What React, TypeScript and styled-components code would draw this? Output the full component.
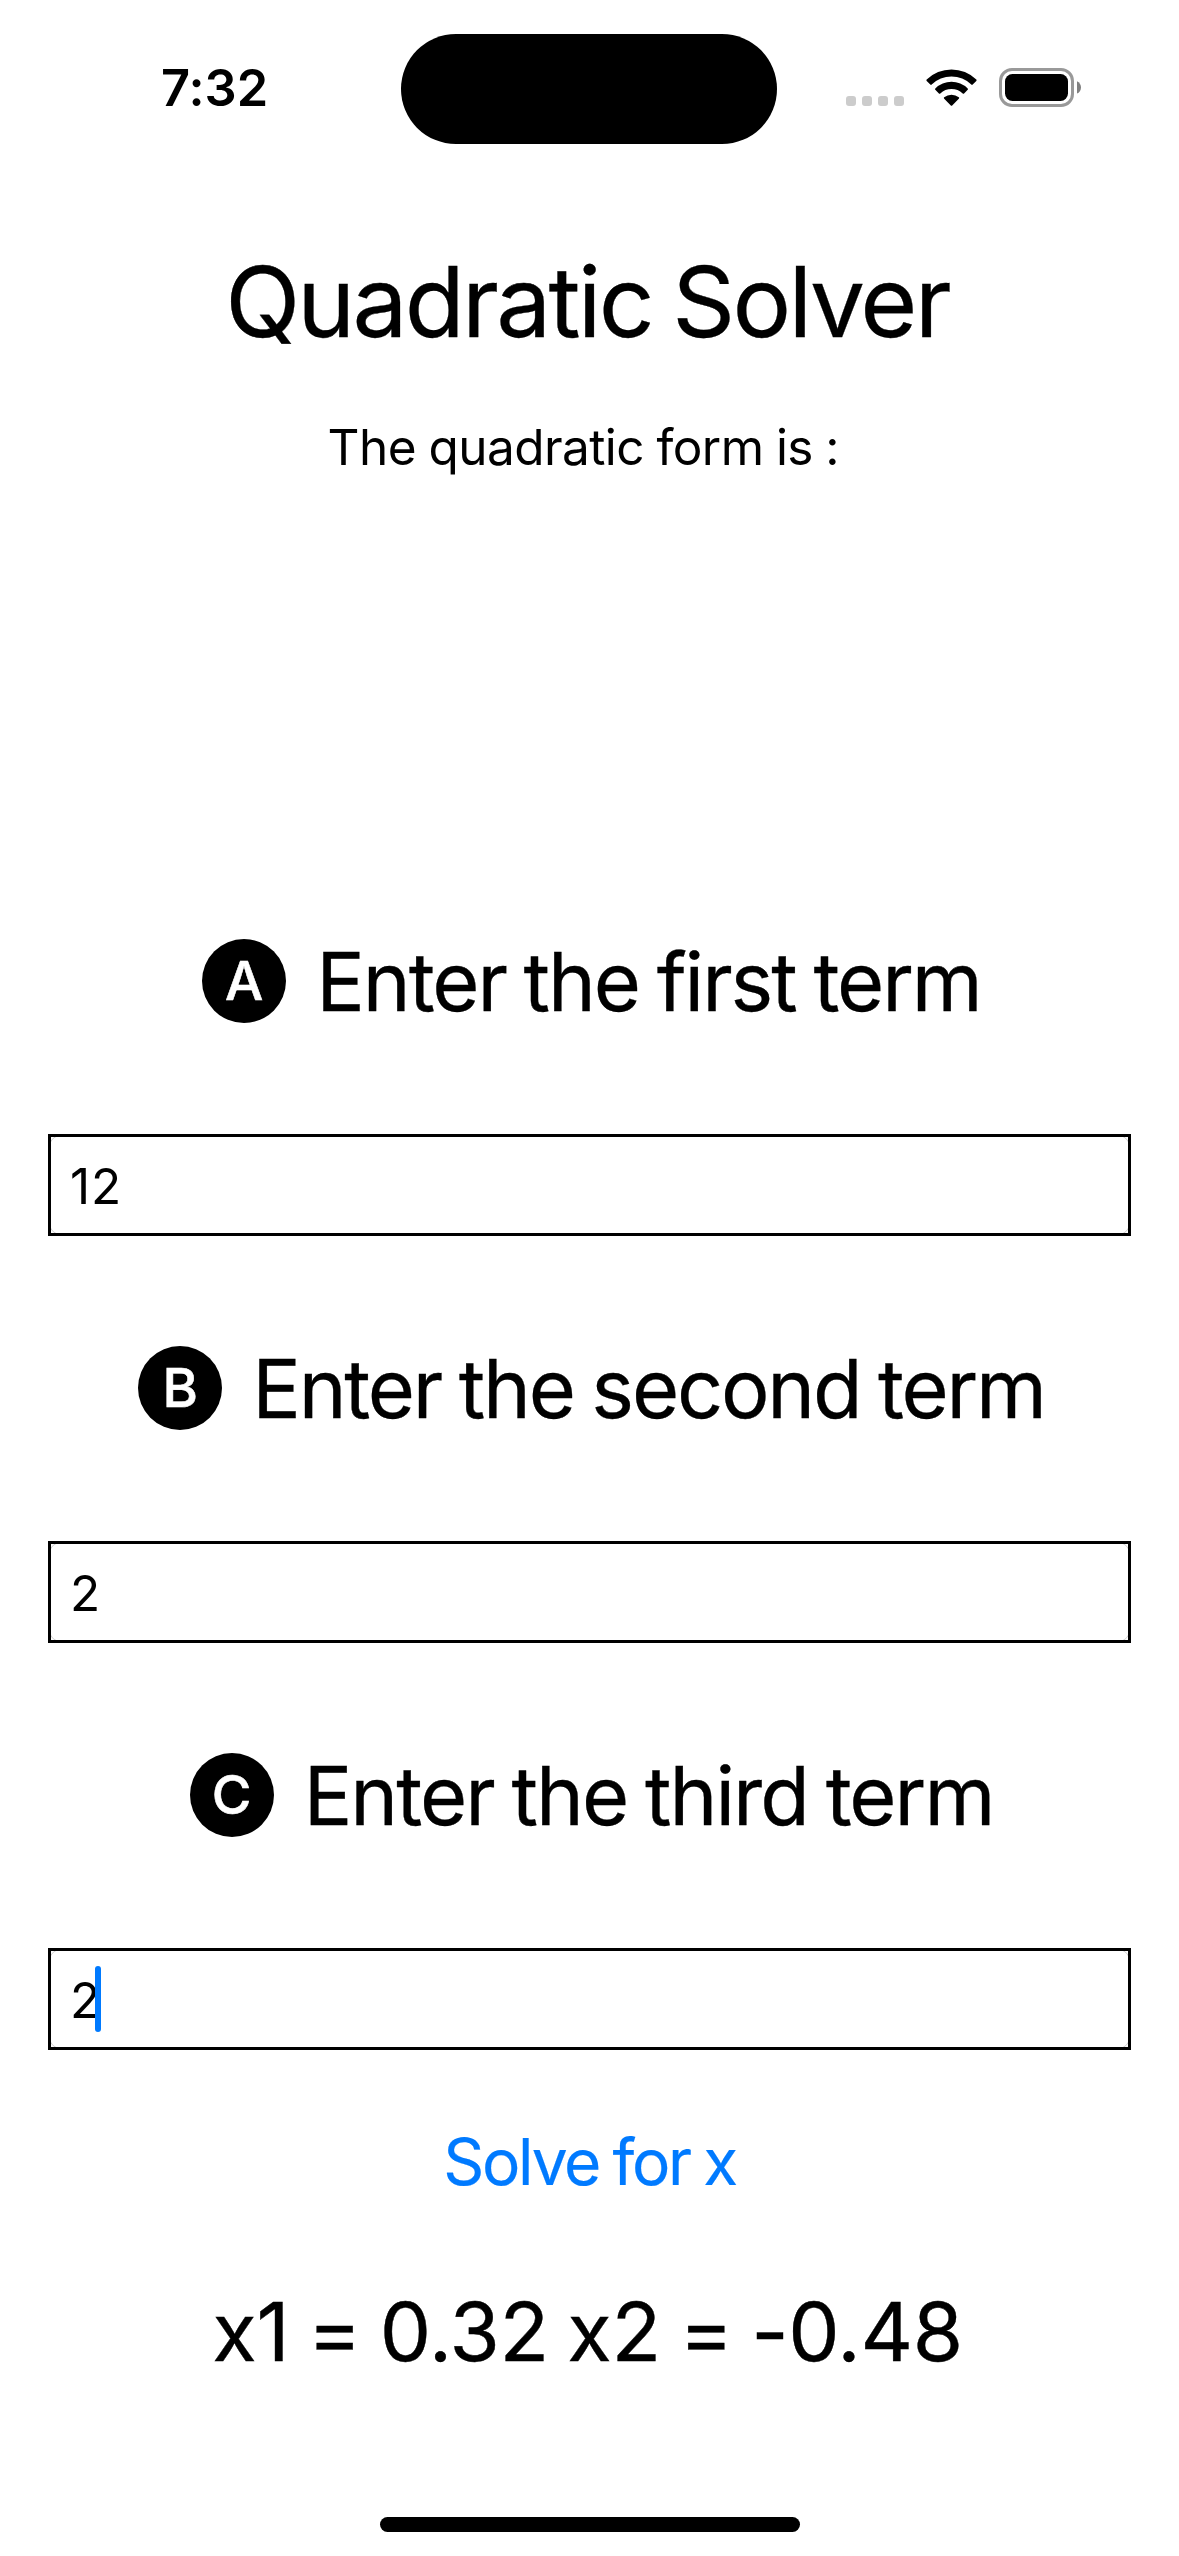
import React from "react";
import styled, { createGlobalStyle } from "styled-components";

const GlobalStyle = createGlobalStyle`
  *, *::before, *::after { box-sizing: border-box; }
  body {
    margin: 0;
    background: #fff;
    color: #000;
    font-family: Inter, "Liberation Sans", sans-serif;
    font-feature-settings: "calt" 0;
  }
`;

const Screen = styled.div`
  width: 1179px;
  height: 2556px;
  display: flex;
  flex-direction: column;
  background: #fff;
  overflow: hidden;
`;

const StatusBar = styled.header`
  height: 177px;
  padding-top: 33px;
  display: grid;
  grid-template-columns: 401px 376px 1fr;
`;

const Clock = styled.time`
  padding-left: 161px;
  height: 111px;
  line-height: 109px;
  font-size: 50.5px;
  font-weight: 600;
`;

const Island = styled.div`
  height: 110px;
  margin-top: 1px;
  border-radius: 55px;
  background: #000;
`;

const StatusIcons = styled.div`
  height: 111px;
  padding: 35px 0 0 69px;
  display: flex;
  align-items: flex-start;
`;

const CellDots = styled.div`
  display: flex;
  gap: 6px;
  margin: 28px 22px 0 0;
`;

const Dot = styled.span`
  width: 10px;
  height: 10px;
  border-radius: 3px;
  background: #ccc;
`;

const WifiGlyph = styled.svg`
  width: 51px;
  height: 38px;
  margin: 1px 22px 0 0;
`;

const BatteryGlyph = styled.svg`
  width: 83px;
  height: 39px;
`;

const Title = styled.h1`
  margin: 64px 0 0;
  padding-right: 5px;
  height: 120px;
  line-height: 121px;
  text-align: center;
  font-size: 98px;
  font-weight: 400;
  letter-spacing: -2.75px;
  word-spacing: -4.5px;
  -webkit-text-stroke: 0.3px currentColor;
`;

const Subtitle = styled.p`
  margin: 56px 0 0;
  height: 60px;
  line-height: 60px;
  text-align: center;
  font-size: 49.5px;
  letter-spacing: -0.55px;
  word-spacing: -1px;
`;

const Form = styled.main`
  margin-top: 462px;
  padding: 0 48px;
  display: flex;
  flex-direction: column;
  gap: 110px;
`;

const Term = styled.section`
  display: flex;
  flex-direction: column;
  gap: 111px;
`;

const TermHeading = styled.div`
  height: 84px;
  padding-left: 4px;
  display: flex;
  justify-content: center;
  gap: 30px;
`;

const Badge = styled.span`
  width: 84px;
  height: 84px;
  border-radius: 50%;
  background: #000;
  color: #fff;
  text-align: center;
  line-height: 84px;
  font-size: 54px;
  font-weight: 500;
  -webkit-text-stroke: 0.6px currentColor;
`;

const TermLabel = styled.span<{ $tracking: number }>`
  line-height: 87px;
  font-size: 81px;
  letter-spacing: ${(p) => p.$tracking}px;
  word-spacing: -3px;
  white-space: nowrap;
  -webkit-text-stroke: 0.3px currentColor;
`;

const Field = styled.div`
  position: relative;
  height: 102px;
  padding: 2px 0 0 21px;
  border: 1px solid #d0d0d0;
  border-radius: 15px;
  display: flex;
  align-items: center;
  font-size: 49.5px;
  line-height: 96px;
  letter-spacing: 0.8px;

  &::before {
    content: "";
    position: absolute;
    inset: -1px;
    border: 3px solid #000;
  }
`;

const Caret = styled.span`
  width: 6px;
  height: 66px;
  margin: -2px 0 0 -6px;
  border-radius: 3px;
  background: #007aff;
  position: relative;
`;

const SolveButton = styled.button`
  margin: 72px 0 0;
  padding: 0;
  height: 80px;
  border: 0;
  background: none;
  color: #007aff;
  font-family: inherit;
  font-feature-settings: inherit;
  font-size: 64px;
  line-height: 80px;
  letter-spacing: -2.25px;
  word-spacing: -2.5px;
  -webkit-text-stroke: 0.2px currentColor;
`;

const Result = styled.p`
  margin: 80px 0 0;
  padding-right: 4px;
  height: 100px;
  line-height: 100px;
  text-align: center;
  font-size: 81.5px;
  letter-spacing: -0.4px;
  word-spacing: -4px;
  -webkit-text-stroke: 0.4px currentColor;
`;

const HomeIndicator = styled.div`
  width: 420px;
  height: 15px;
  margin: auto auto 24px 380px;
  border-radius: 8px;
  background: #000;
  flex: none;
`;

const terms = [
  { letter: "A", label: "Enter the first term", value: "12", tracking: -2.07, focused: false },
  { letter: "B", label: "Enter the second term", value: "2", tracking: -2.2, focused: false },
  { letter: "C", label: "Enter the third term", value: "2", tracking: -1.98, focused: true },
];

function Wifi() {
  return (
    <WifiGlyph viewBox="0 0 51 38" aria-hidden="true">
      <path d="M.7 10.600a35.400 35.400 0 0 1 49.600 0c.4.4.4 1 0 1.400l-3.600 3.600c-.4.4-1 .4-1.400 0a28.300 28.300 0 0 0-39.600 0c-.4.4-1 .4-1.400 0L.7 12c-.4-.4-.4-1 0-1.400z" />
      <path d="M9.300 19.400a23.200 23.200 0 0 1 32.400 0c.4.4.4 1 0 1.400l-3.600 3.600c-.4.4-1 .4-1.400 0a16.300 16.300 0 0 0-22.400 0c-.4.4-1 .4-1.400 0l-3.600-3.600c-.4-.4-.4-1 0-1.400z" />
      <path d="M18.200 28.300a11.300 11.300 0 0 1 14.600 0c.5.4.5 1 0 1.500l-6.600 6.700c-.4.4-1 .4-1.400 0l-6.600-6.700c-.5-.5-.5-1.100 0-1.500z" />
    </WifiGlyph>
  );
}

function Battery() {
  return (
    <BatteryGlyph viewBox="0 0 83 39" aria-hidden="true">
      <rect x="1.500" y="1.500" width="72" height="36" rx="11.500" fill="none" stroke="#999" strokeWidth="3" />
      <rect x="6" y="6" width="63" height="27" rx="7.500" />
      <path d="M78 13.200c2.400 1 4 3.400 4 6.200s-1.600 5.200-4 6.200z" fill="#808080" />
    </BatteryGlyph>
  );
}

export default function App() {
  return (
    <Screen>
      <GlobalStyle />
      <StatusBar>
        <Clock>7:32</Clock>
        <Island />
        <StatusIcons>
          <CellDots>
            <Dot />
            <Dot />
            <Dot />
            <Dot />
          </CellDots>
          <Wifi />
          <Battery />
        </StatusIcons>
      </StatusBar>
      <Title>Quadratic Solver</Title>
      <Subtitle>{"The quadratic form is :\u00a0"}</Subtitle>
      <Form>
        {terms.map((t) => (
          <Term key={t.letter}>
            <TermHeading>
              <Badge>{t.letter}</Badge>
              <TermLabel $tracking={t.tracking}>{t.label}</TermLabel>
            </TermHeading>
            <Field>
              {t.value}
              {t.focused && <Caret />}
            </Field>
          </Term>
        ))}
      </Form>
      <SolveButton>Solve for x</SolveButton>
      <Result>x1 = 0.32 x2 = -0.48</Result>
      <HomeIndicator />
    </Screen>
  );
}
